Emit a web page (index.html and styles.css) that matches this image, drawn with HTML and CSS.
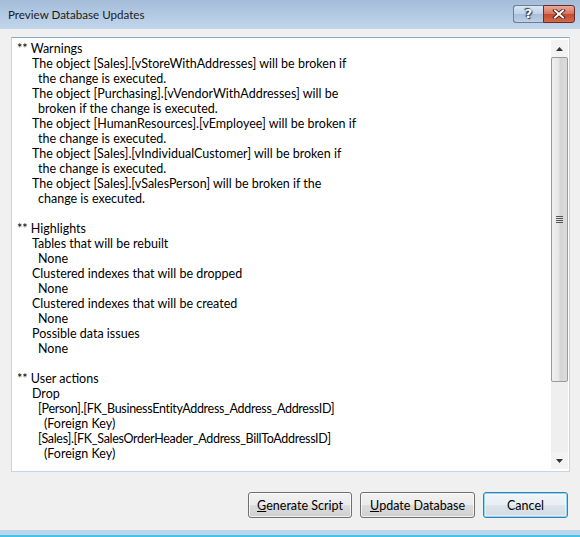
FILE: index.html
```html
<!DOCTYPE html>
<html>
<head>
<meta charset="utf-8">
<link rel="stylesheet" href="styles.css">
</head>
<body>
<div class="window">
  <div class="titlebar">
    <div class="title">Preview Database Updates</div>
    <div class="caption-buttons">
      <div class="cbtn help"><span>?</span></div>
      <div class="cbtn close">
        <svg width="14" height="10" viewBox="0 0 14 10"><path d="M3 1.5 L11 8.5 M11 1.5 L3 8.5" stroke="#3b1210" stroke-width="3.6" stroke-linecap="square"/><path d="M3 1.5 L11 8.5 M11 1.5 L3 8.5" stroke="#ffffff" stroke-width="2" stroke-linecap="square"/></svg>
      </div>
    </div>
  </div>
  <div class="client">
    <div class="textbox">
      <div class="content">
        <div class="l0">** Warnings</div>
        <div class="l1">The object [Sales].[vStoreWithAddresses] will be broken if</div>
        <div class="l2">the change is executed.</div>
        <div class="l1">The object [Purchasing].[vVendorWithAddresses] will be</div>
        <div class="l2">broken if the change is executed.</div>
        <div class="l1">The object [HumanResources].[vEmployee] will be broken if</div>
        <div class="l2">the change is executed.</div>
        <div class="l1">The object [Sales].[vIndividualCustomer] will be broken if</div>
        <div class="l2">the change is executed.</div>
        <div class="l1">The object [Sales].[vSalesPerson] will be broken if the</div>
        <div class="l2">change is executed.</div>
        <div class="blank"></div>
        <div class="l0">** Highlights</div>
        <div class="l1">Tables that will be rebuilt</div>
        <div class="l2">None</div>
        <div class="l1">Clustered indexes that will be dropped</div>
        <div class="l2">None</div>
        <div class="l1">Clustered indexes that will be created</div>
        <div class="l2">None</div>
        <div class="l1">Possible data issues</div>
        <div class="l2">None</div>
        <div class="blank"></div>
        <div class="l0">** User actions</div>
        <div class="l1">Drop</div>
        <div class="l2 tight">[Person].[FK_BusinessEntityAddress_Address_AddressID]</div>
        <div class="l3">(Foreign Key)</div>
        <div class="l2 tight">[Sales].[FK_SalesOrderHeader_Address_BillToAddressID]</div>
        <div class="l3">(Foreign Key)</div>
      </div>
      <div class="scrollbar">
        <div class="arrow up"><svg width="7" height="4" viewBox="0 0 7 4"><path d="M0 4 L3.5 0 L7 4 Z" fill="#333"/></svg></div>
        <div class="thumb"><div class="grip"></div></div>
        <div class="track"></div>
        <div class="arrow down"><svg width="7" height="4" viewBox="0 0 7 4"><path d="M0 0 L3.5 4 L7 0 Z" fill="#333"/></svg></div>
      </div>
    </div>
    <div class="buttons">
      <div class="btn"><u>G</u>enerate Script</div>
      <div class="btn wide"><u>U</u>pdate Database</div>
      <div class="btn default">Cancel</div>
    </div>
  </div>
  <div class="frame-bottom"></div>
</div>
</body>
</html>
```

FILE: styles.css
```css
html, body {
  margin: 0;
  padding: 0;
}
body {
  font-family: "Lato", "Noto Sans", sans-serif;
  font-size: 12.5px;
  color: #000;
}
.window {
  width: 580px;
  height: 537px;
  display: flex;
  flex-direction: column;
  background: #f0f0f0;
  overflow: hidden;
}
.titlebar {
  height: 29px;
  flex: none;
  display: flex;
  align-items: flex-start;
  justify-content: space-between;
  background: linear-gradient(to bottom, #a4bcd8 0%, #b4cbe4 55%, #c2d6ec 100%);
}
.title {
  padding: 7px 0 0 8px;
  font-size: 11.6px;
  color: #1b1b1b;
  line-height: 16px;
}
.caption-buttons {
  display: flex;
  padding: 5px 5px 0 0;
}
.cbtn {
  height: 18px;
  box-sizing: border-box;
  display: flex;
  align-items: center;
  justify-content: center;
  border: 1px solid #6d7f96;
}
.help {
  width: 30px;
  border-radius: 3px 0 0 3px;
  border-right: none;
  background: linear-gradient(to bottom, #d8e5f3 0%, #c2d4e8 48%, #a9bfd8 52%, #bcd0e6 100%);
}
.help span {
  font-family: "DejaVu Sans", sans-serif;
  font-weight: bold;
  font-size: 13px;
  color: #fff;
  text-shadow: 0 0 1px #2a3a50, 1px 1px 1px #2a3a50, -1px -1px 1px #2a3a50;
  line-height: 14px;
}
.close {
  width: 32px;
  border-radius: 0 3px 3px 0;
  border-color: #6e2a22;
  background: linear-gradient(to bottom, #e9a99a 0%, #d8735f 48%, #c44a30 52%, #d26a4c 100%);
}
.client {
  flex: 1;
  display: flex;
  flex-direction: column;
  padding: 8px 10px 0 11px;
}
.textbox {
  height: 435px;
  box-sizing: border-box;
  border: 1px solid #c6d4e4;
  border-top-color: #8fa9c8;
  background: #fff;
  display: flex;
}
.content {
  flex: 1;
  padding: 3px 0 0 5px;
  line-height: 15px;
  white-space: nowrap;
  overflow: hidden;
}
.blank { height: 15px; }
.l1 { padding-left: 15px; }
.l2 { padding-left: 21px; }
.l3 { padding-left: 27px; }
.tight { letter-spacing: -0.3px; }
.scrollbar {
  width: 17px;
  margin: 2px 1px 2px 0;
  display: flex;
  flex-direction: column;
  background: #ebebeb;
}
.arrow {
  height: 17px;
  flex: none;
  display: flex;
  align-items: center;
  justify-content: center;
  background: #f3f3f3;
}
.thumb {
  height: 325px;
  box-sizing: border-box;
  border: 1px solid #9a9a9a;
  border-radius: 2px;
  background: linear-gradient(to right, #f0f0f0 0%, #e6e6e6 45%, #d4d4d4 55%, #dcdcdc 100%);
  display: flex;
  align-items: center;
  justify-content: center;
}
.grip {
  width: 7px;
  height: 7px;
  background: repeating-linear-gradient(to bottom, #555 0 1px, transparent 1px 2px);
}
.track {
  flex: 1;
  background: #efefef;
}
.buttons {
  display: flex;
  justify-content: flex-end;
  gap: 8px;
  margin-top: 20px;
  padding-right: 2px;
}
.btn {
  height: 26px;
  box-sizing: border-box;
  width: 104px;
  border: 1px solid #707070;
  border-radius: 3px;
  background: linear-gradient(to bottom, #f2f2f2 0%, #ebebeb 48%, #dddddd 52%, #cfcfcf 100%);
  display: flex;
  align-items: center;
  justify-content: center;
  font-size: 12.5px;
  color: #000;
  box-shadow: inset 0 0 0 1px rgba(255,255,255,0.7);
}
.wide { width: 115px; }
.default {
  width: 85px;
  border-color: #3c7fb1;
  box-shadow: inset 0 0 0 1px #8ed4f5, inset 0 0 0 2px rgba(255,255,255,0.5);
  background: linear-gradient(to bottom, #f0f5f9 0%, #e8eef3 48%, #dde4ea 52%, #d2dce4 100%);
}
.frame-bottom {
  height: 7px;
  flex: none;
  background: linear-gradient(to bottom, #bcd4ec 0 5px, #3fc5ea 5px 7px);
}
```
